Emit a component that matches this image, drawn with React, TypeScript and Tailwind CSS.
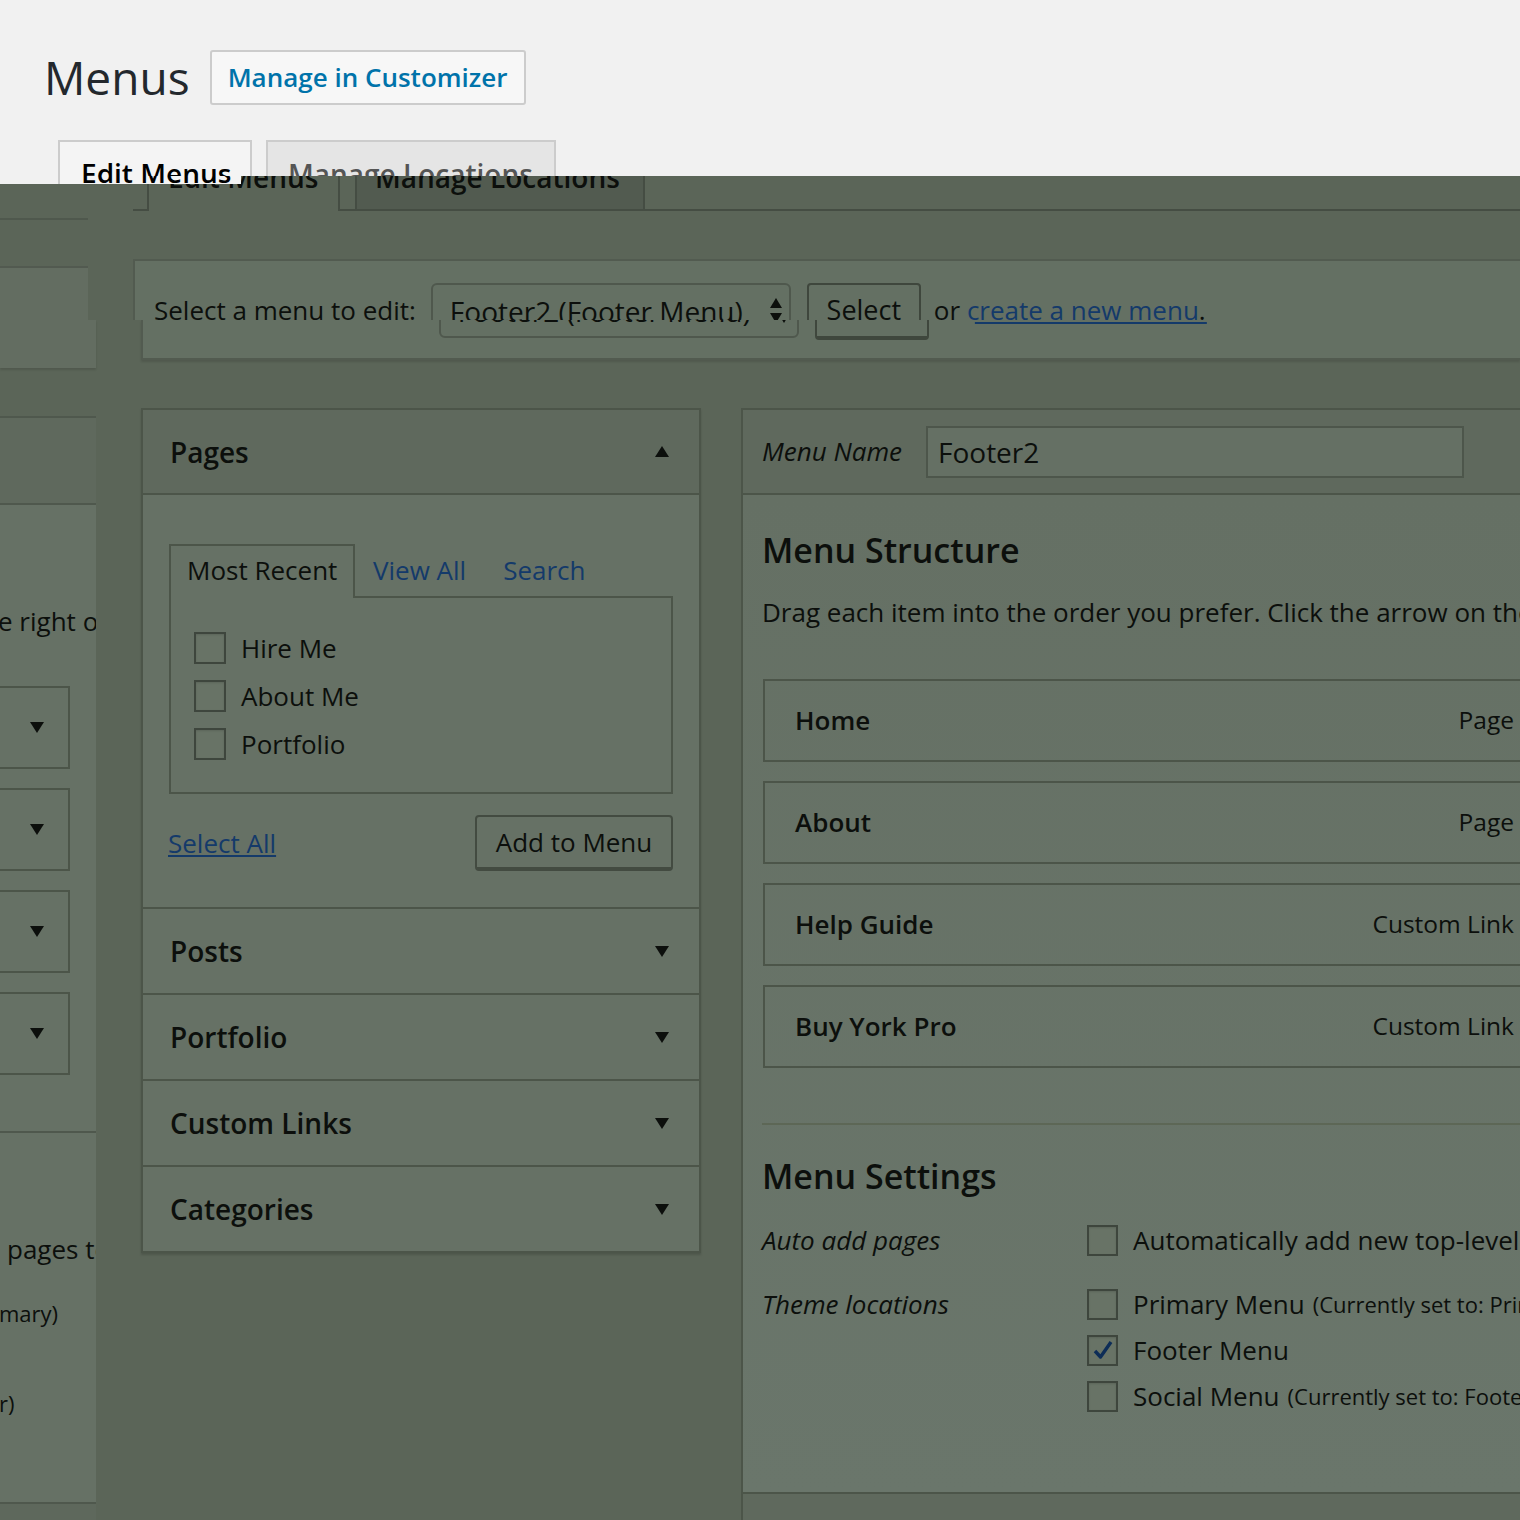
import React from "react";

const BORDER = "border-[#4c5549]";

function UpTri({ className = "" }: { className?: string }) {
  return (
    <svg width="14" height="11" viewBox="0 0 14 11" className={className}>
      <polygon points="0,11 7,0 14,11" fill="#0c0f0c" />
    </svg>
  );
}
function DownTri({ className = "" }: { className?: string }) {
  return (
    <svg width="14" height="11" viewBox="0 0 14 11" className={className}>
      <polygon points="0,0 14,0 7,11" fill="#0c0f0c" />
    </svg>
  );
}

function Checkbox({ checked = false, size = 32 }: { checked?: boolean; size?: number }) {
  return (
    <div
      className={`shrink-0 border-2 border-[#3e463d] bg-[#687366] shadow-[inset_0_1px_2px_rgba(0,0,0,0.12)] flex items-center justify-center ${
        size === 32 ? "w-[32px] h-[32px]" : "w-[31px] h-[31px]"
      }`}
    >
      {checked && (
        <svg width="24" height="24" viewBox="0 0 24 24">
          <path d="M4 13 L9.5 19 L20 4" fill="none" stroke="#0d2d57" strokeWidth="3.4" strokeLinejoin="round" />
        </svg>
      )}
    </div>
  );
}

function SelectBar() {
  return (
    <div className="h-[101px] w-[1500px] bg-[#647063] border-y-2 border-l-2 border-[#525b50] flex items-start pt-[22px] pl-[19px]">
      <span className="text-[26px] leading-[55px] whitespace-nowrap">Select a menu to edit:</span>
      <div className="ml-[15px] w-[360px] h-[55px] rounded-[6px] border-2 border-[#4f584d] flex items-center justify-between pl-[17px] pr-[6px]">
        <span className="text-[28px] whitespace-nowrap">Footer2 (Footer Menu)</span>
        <svg width="14" height="28" viewBox="0 0 14 28">
          <polygon points="1,11 7,1 13,11" fill="#0c0f0c" />
          <polygon points="1,16 13,16 7,26" fill="#0c0f0c" />
        </svg>
      </div>
      <div className="ml-[16px] w-[114px] h-[57px] rounded-[4px] border-2 border-b-4 border-[#3f473d] flex items-center justify-center text-[27px]">
        Select
      </div>
      <span className="ml-[13px] text-[26px] leading-[55px] whitespace-nowrap">
        or <span className="underline text-[#143a6a]">create a new menu</span>.
      </span>
    </div>
  );
}

function LeftColumn() {
  return (
    <div className="w-[96px] shrink-0 flex flex-col">
      <div className="h-[7px]" />
      <div className="h-[48px] w-[88px] border-t-2 border-[#4f584d]" />
      <div className="h-[54px] w-[88px] bg-[#636d61] border-t-2 border-[#525a50]" />
      <div className="h-[48px] w-[96px] bg-[#636d61] shadow-[0_2px_2px_rgba(0,0,0,0.12)]" />
      <div className="h-[48px]" />
      <div className="h-[87px] bg-[#5f695d] border-t-2 border-[#4f584d]" />
      <div className="h-[628px] bg-[#667165] border-t-2 border-[#4f584d] overflow-hidden">
        <div className="mt-[100px] h-[32px] text-[26px] leading-[32px] whitespace-nowrap -ml-[2px]">e right of the item</div>
        <div className="mt-[49px] flex flex-col gap-[19px]">
          {[0, 1, 2, 3].map((i) => (
            <div key={i} className={`w-[70px] h-[83px] border-2 border-l-0 ${BORDER} flex items-center justify-end pr-[24px]`}>
              <DownTri />
            </div>
          ))}
        </div>
      </div>
      <div className="h-[371px] bg-[#667165] border-t-2 border-[#4f584d] overflow-hidden whitespace-nowrap">
        <div className="mt-[100px] h-[32px] text-[26px] leading-[32px] pl-[7px]">pages to this menu</div>
        <div className="mt-[32px] h-[32px] text-[22px] leading-[32px] -ml-[1px]">mary)</div>
        <div className="mt-[58px] h-[32px] text-[22px] leading-[32px] -ml-[1px]">r)</div>
      </div>
      <div className="flex-1 border-t-2 border-[#4f584d] bg-[#5e685c]" />
    </div>
  );
}

function PagesPanel() {
  const sections = ["Posts", "Portfolio", "Custom Links", "Categories"];
  return (
    <div className={`w-[560px] shrink-0 border-2 ${BORDER} bg-[#667165] shadow-[0_2px_2px_rgba(0,0,0,0.15)]`}>
      <div className={`h-[85px] bg-[#5f695d] border-b-2 ${BORDER} flex items-center justify-between pl-[27px] pr-[30px]`}>
        <span className="text-[28px] font-semibold">Pages</span>
        <UpTri />
      </div>
      <div className="pt-[49px] px-[26px] pb-[36px]">
        <div className="flex items-start">
          <div className={`relative z-10 w-[186px] h-[54px] border-2 border-b-0 ${BORDER} bg-[#667165] pl-[16px] text-[26px] leading-[48px]`}>
            Most Recent
          </div>
          <span className="ml-[18px] text-[26px] leading-[52px] text-[#143a6a]">View All</span>
          <span className="ml-[37px] text-[26px] leading-[52px] text-[#143a6a]">Search</span>
        </div>
        <div className={`-mt-[2px] w-[504px] h-[198px] border-2 ${BORDER} pt-[34px] pl-[23px] flex flex-col gap-[16px]`}>
          {["Hire Me", "About Me", "Portfolio"].map((t) => (
            <div key={t} className="flex items-center h-[32px]">
              <Checkbox />
              <span className="ml-[15px] text-[26px] leading-[32px]">{t}</span>
            </div>
          ))}
        </div>
        <div className="mt-[21px] flex items-center justify-between w-[504px]">
          <span className="text-[26px] underline text-[#143a6a] -ml-[1px]">Select All</span>
          <div className="w-[198px] h-[56px] rounded-[4px] border-2 border-b-4 border-[#434b41] flex items-center justify-center text-[26px]">
            Add to Menu
          </div>
        </div>
      </div>
      {sections.map((s) => (
        <div key={s} className={`h-[86px] border-t-2 ${BORDER} flex items-center justify-between pl-[27px] pr-[30px]`}>
          <span className="text-[28px] font-semibold">{s}</span>
          <DownTri />
        </div>
      ))}
    </div>
  );
}

function MenuPanel() {
  const items: [string, string][] = [
    ["Home", "Page"],
    ["About", "Page"],
    ["Help Guide", "Custom Link"],
    ["Buy York Pro", "Custom Link"],
  ];
  return (
    <div className={`w-[900px] shrink-0 border-l-2 border-t-2 ${BORDER} bg-[#667165]`}>
      <div className={`h-[85px] bg-[#5f695d] border-b-2 ${BORDER} flex items-center pl-[19px]`}>
        <span className="w-[164px] shrink-0 text-[26px] italic">Menu Name</span>
        <div className="w-[538px] h-[52px] border-2 border-[#4d564b] bg-[#657064] flex items-center pl-[10px] text-[28px]">
          Footer2
        </div>
      </div>
      <div className={`h-[999px] border-b-2 ${BORDER} pl-[19px] bg-gradient-to-b from-[#657064] to-[#6a766b]`}>
        <div className="pt-[35px] text-[34px] leading-[40px] font-semibold">Menu Structure</div>
        <div className="mt-[26px] text-[26px] leading-[32px] whitespace-nowrap">
          Drag each item into the order you prefer. Click the arrow on the right of the item to reveal additional configuration options.
        </div>
        <div className="mt-[51px] flex flex-col gap-[19px] ml-[1px]">
          {items.map(([a, b]) => (
            <div key={a} className={`w-[797px] h-[83px] border-2 ${BORDER} flex items-center justify-between pl-[30px] pr-[44px]`}>
              <span className="text-[26px] font-semibold">{a}</span>
              <span className="text-[24.5px]">{b}</span>
            </div>
          ))}
        </div>
        <div className="mt-[55px] border-t-2 border-[#59634f]/70 w-[860px]" />
        <div className="mt-[31px] text-[34px] leading-[40px] font-semibold">Menu Settings</div>
        <div className="mt-[28px] flex items-center h-[32px] whitespace-nowrap">
          <span className="w-[325px] shrink-0 text-[26px] italic">Auto add pages</span>
          <Checkbox size={31} />
          <span className="ml-[15px] text-[26px]">Automatically add new top-level pages to this menu</span>
        </div>
        <div className="mt-[32px] flex items-start whitespace-nowrap">
          <span className="w-[325px] shrink-0 text-[26px] leading-[32px] italic">Theme locations</span>
          <div className="flex flex-col gap-[14px]">
            <div className="flex items-center h-[32px]">
              <Checkbox size={31} />
              <span className="ml-[15px] text-[26px]">Primary Menu</span>
              <span className="ml-[8px] text-[22px]">(Currently set to: Primary)</span>
            </div>
            <div className="flex items-center h-[32px]">
              <Checkbox size={31} checked />
              <span className="ml-[15px] text-[26px]">Footer Menu</span>
            </div>
            <div className="flex items-center h-[32px]">
              <Checkbox size={31} />
              <span className="ml-[15px] text-[26px]">Social Menu</span>
              <span className="ml-[8px] text-[22px]">(Currently set to: Footer)</span>
            </div>
          </div>
        </div>
      </div>
      <div className="h-[60px] bg-[#5f695d]" />
    </div>
  );
}

export default function App() {
  return (
    <div className="w-[1520px] h-[1520px] overflow-hidden bg-[#5b6558] font-['Open_Sans',sans-serif] text-[#0c0f0c] flex flex-col">
      {/* light top layer */}
      <div className="h-[176px] shrink-0 bg-[#f1f1f1] overflow-hidden">
        <div className="flex items-start pt-[50px] pl-[44px]">
          <h1 className="text-[46px] leading-[55px] text-[#23282d]">Menus</h1>
          <div className="ml-[20px] h-[55px] w-[316px] border-2 border-[#cccccc] rounded-[3px] bg-[#f7f7f7] flex items-center justify-center text-[26px] font-semibold text-[#0073aa]">
            Manage in Customizer
          </div>
        </div>
        <div className="flex pl-[58px] mt-[35px]">
          <div className="w-[194px] h-[50px] border-2 border-b-0 border-[#cccccc] bg-[#f4f4f4] pl-[21px] pt-[16px] text-[28px] leading-[32px] font-semibold text-black whitespace-nowrap">
            Edit Menus
          </div>
          <div className="ml-[14px] w-[290px] h-[50px] border-2 border-b-0 border-[#cccccc] bg-[#e5e5e5] pl-[20px] pt-[16px] text-[28px] leading-[32px] font-semibold text-[#555555] whitespace-nowrap">
            Manage Locations
          </div>
        </div>
      </div>

      {/* dark overlay layer */}
      <div className="flex-1 flex flex-col">
        {/* shifted tab row */}
        <div className="relative h-[35px] shrink-0 flex">
          <div className="w-[133px] shrink-0" />
          <div className="w-[14px] shrink-0 border-b-2 border-[#454d43]" />
          <div className="w-[193px] shrink-0 border-x-2 border-[#454d43] overflow-hidden pl-[19px]">
            <div className="-mt-[15px] text-[28px] leading-[32px] font-semibold whitespace-nowrap">Edit Menus</div>
          </div>
          <div className="w-[15px] shrink-0 border-b-2 border-[#454d43]" />
          <div className="w-[290px] shrink-0 border-2 border-t-0 border-[#454d43] bg-[#525b50] overflow-hidden pl-[18px]">
            <div className="-mt-[15px] text-[28px] leading-[32px] font-semibold whitespace-nowrap">Manage Locations</div>
          </div>
          <div className="flex-1 border-b-2 border-[#454d43]" />
          {/* light patch left over from the upper layer */}
          <div className="absolute left-0 top-0 w-[241px] h-[8px] bg-[#f1f1f1] overflow-hidden flex">
            <div className="ml-[58px] w-[194px] h-[8px] border-l-2 border-[#cccccc] bg-[#f4f4f4] pl-[21px] overflow-hidden">
              <div className="-mt-[20px] text-[28px] leading-[32px] font-semibold text-black whitespace-nowrap">Edit Menus</div>
            </div>
          </div>
        </div>

        <div className="flex-1 flex">
          <LeftColumn />
          <div className="flex-1 min-w-0 flex flex-col">
            <div className="mt-[48px] h-[101px] shrink-0">
              <div className="h-[61px] overflow-hidden ml-[37px]">
                <SelectBar />
              </div>
              <div className="h-[40px] overflow-hidden ml-[45px] shadow-[0_2px_2px_rgba(0,0,0,0.12)]">
                <div className="-mt-[61px]">
                  <SelectBar />
                </div>
              </div>
            </div>
            <div className="mt-[48px] flex items-start pl-[45px] gap-[40px]">
              <PagesPanel />
              <MenuPanel />
            </div>
          </div>
        </div>
      </div>
    </div>
  );
}
